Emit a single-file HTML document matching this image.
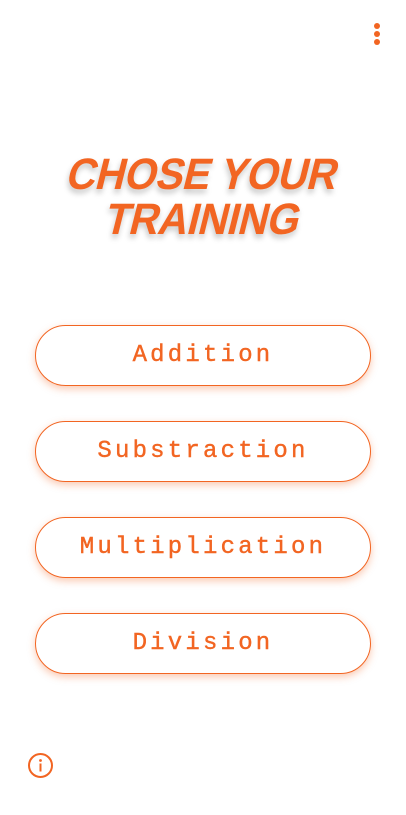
<!DOCTYPE html>
<html><head><meta charset="utf-8"><style>
html,body{margin:0;padding:0;background:#fff;width:406px;height:815px;overflow:hidden;position:relative;font-family:"Liberation Sans",sans-serif}
.dots{position:absolute;left:374px;top:23px;width:6px}
.dots i{display:block;width:6px;height:6px;border-radius:50%;background:#f26522;margin-bottom:2px}
.title{position:absolute;left:0;top:152px;width:406px;text-align:center;color:#f26522;font-weight:bold;font-size:44px;line-height:45px;text-shadow:0 4px 6px rgba(0,0,0,.22)}
.title span{display:inline-block;transform:skewX(-14deg) scaleX(0.93);letter-spacing:-0.5px}
.btn{position:absolute;left:35px;width:334px;height:59px;border:1px solid #f26522;border-radius:31px;box-shadow:0 3px 8px rgba(242,101,34,.35);display:flex;align-items:center;justify-content:center;color:#f26522;font-family:"Liberation Mono",monospace;font-size:24px;letter-spacing:3.2px;box-sizing:content-box;-webkit-text-stroke:0.4px #f26522}
.info{position:absolute;left:27px;top:752px}
</style></head><body>
<div class="dots"><i></i><i></i><i></i></div>
<div class="title"><span>CHOSE YOUR</span><br><span>TRAINING</span></div>
<div class="btn" style="top:325px">Addition</div>
<div class="btn" style="top:421px">Substraction</div>
<div class="btn" style="top:517px">Multiplication</div>
<div class="btn" style="top:613px">Division</div>
<svg class="info" width="27" height="27" viewBox="0 0 27 27"><circle cx="13.5" cy="13.5" r="11.5" fill="none" stroke="#f26522" stroke-width="2"/><circle cx="13.5" cy="8.5" r="1.4" fill="#f26522"/><rect x="12.5" y="11.5" width="2" height="8" fill="#f26522"/></svg>
</body></html>
